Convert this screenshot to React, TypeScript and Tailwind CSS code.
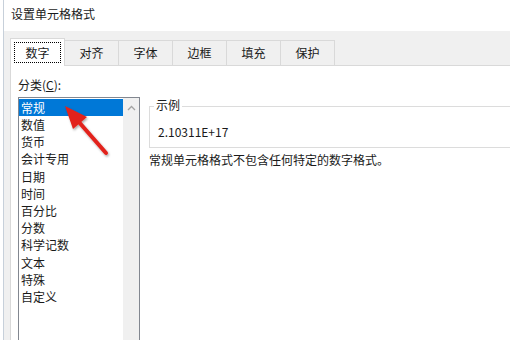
import React from "react";

const font = { fontFamily: '"Noto Sans CJK SC", "Noto Sans", sans-serif' };

const categories = [
  "常规",
  "数值",
  "货币",
  "会计专用",
  "日期",
  "时间",
  "百分比",
  "分数",
  "科学记数",
  "文本",
  "特殊",
  "自定义",
];

const tabs = ["数字", "对齐", "字体", "边框", "填充", "保护"];

export default function App() {
  return (
    <div
      className="relative w-[510px] h-[340px] overflow-hidden bg-white pl-[3px] text-[12px] text-[#1a1a1a]"
      style={font}
    >
      <div className="flex h-full flex-col overflow-hidden border-l border-[#c7d0da]">
        {/* Title */}
        <div className="flex h-[31px] shrink-0 items-center bg-white pl-[7px] pb-[4px]">
          设置单元格格式
        </div>

        {/* Body */}
        <div className="flex flex-1 shrink-0 flex-col bg-[#f0f0f0] pt-[6px] pl-[6px]">
          {/* Tabs */}
          <div className="flex h-[28px] shrink-0 items-end">
            {tabs.map((t, i) =>
              i === 0 ? (
                <div
                  key={t}
                  className="relative z-10 -mb-px flex h-[28px] w-[55px] items-center justify-center border border-b-0 border-[#d9d9d9] bg-white p-[3px]"
                >
                  <div className="flex h-full w-full items-center justify-center border border-dotted border-black">
                    {t}
                  </div>
                </div>
              ) : (
                <div
                  key={t}
                  className="flex h-[25px] w-[54px] items-center justify-center border border-l-0 border-b-0 border-[#d9d9d9] bg-[#f0f0f0]"
                >
                  {t}
                </div>
              )
            )}
          </div>

          {/* Panel */}
          <div className="flex flex-1 shrink-0 border-t border-l border-[#d9d9d9] bg-white pl-[7px] pt-[11px]">
            <div className="flex shrink-0 flex-col">
              <div className="h-[20px] leading-[16px]">
                分类(<span className="underline">C</span>):
              </div>
              <div className="flex h-[260px] w-[122px] shrink-0 border border-[#828790] bg-white">
                <div className="flex flex-1 flex-col pt-[1px]">
                  {categories.map((c, i) => (
                    <div
                      key={c}
                      className={
                        i === 0
                          ? "h-[17px] shrink-0 bg-[#0078d7] pl-[2px] leading-[17px] text-white"
                          : "h-[17.2px] shrink-0 pl-[2px] leading-[17px]"
                      }
                    >
                      {c}
                    </div>
                  ))}
                </div>
                <div className="flex w-[16px] flex-col items-center bg-[#f0f0f0] pt-[7px]">
                  <svg width="9" height="6" viewBox="0 0 9 6">
                    <path d="M1 5 L4.5 1.5 L8 5" fill="none" stroke="#a3a3a3" strokeWidth="1.3" />
                  </svg>
                </div>
              </div>
            </div>

            <div className="ml-[9px] flex flex-1 flex-col pt-[29px]">
              {/* Group box */}
              <div className="relative h-[42px] shrink-0 border border-r-0 border-[#dcdcdc]">
                <div className="absolute -top-[10px] left-[4px] bg-white px-[2px] leading-[16px]">
                  示例
                </div>
                <div className="pl-[8px] pt-[15px] leading-[20px]">2.10311E+17</div>
              </div>
              <div className="mt-[4px] leading-[16px]">常规单元格格式不包含任何特定的数字格式。</div>
            </div>
          </div>
        </div>
      </div>

      {/* Red arrow annotation */}
      <svg
        className="pointer-events-none absolute left-0 top-0"
        width="510"
        height="340"
        viewBox="0 0 510 340"
      >
        <defs>
          <filter id="sh" x="-20%" y="-20%" width="140%" height="140%">
            <feDropShadow dx="1" dy="1.5" stdDeviation="1.2" floodColor="#000" floodOpacity="0.35" />
          </filter>
        </defs>
        <g filter="url(#sh)">
          <line x1="106" y1="153" x2="78" y2="121" stroke="#e2231a" strokeWidth="4" strokeLinecap="round" />
          <polygon points="65,106 73,129 87,117" fill="#e2231a" />
        </g>
      </svg>
    </div>
  );
}
